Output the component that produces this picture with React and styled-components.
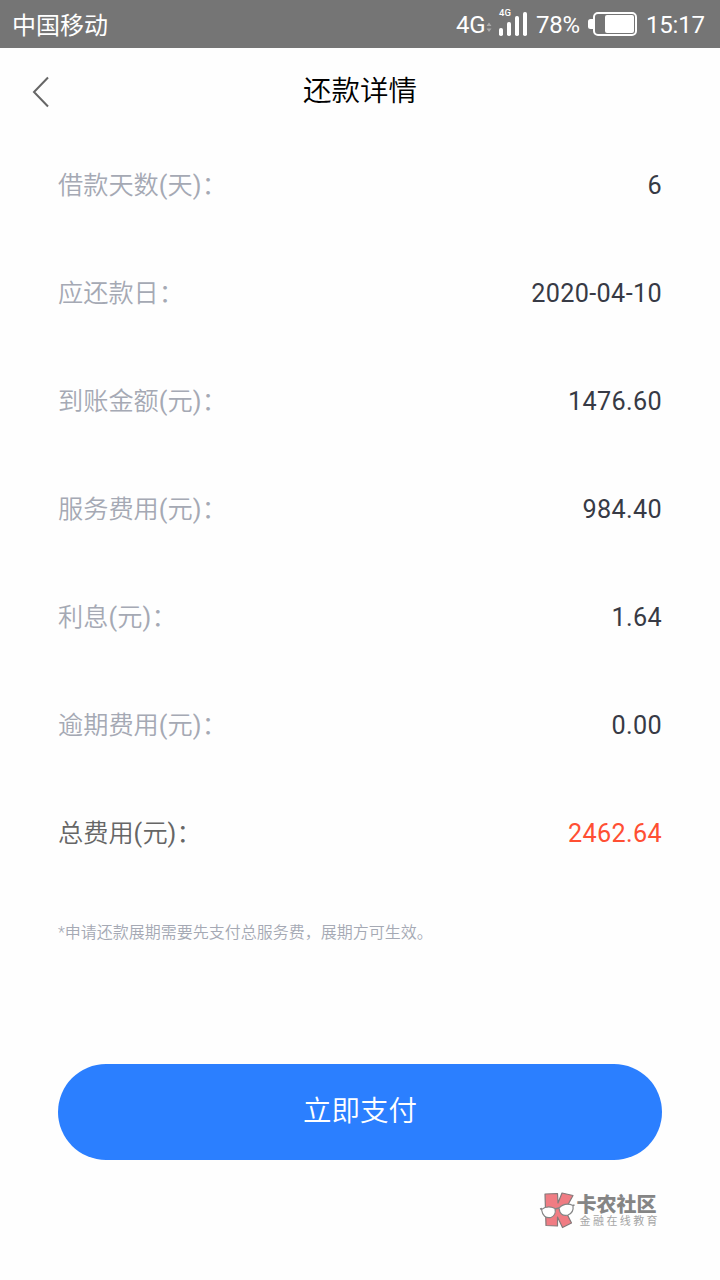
import React from "react";
import styled, { createGlobalStyle } from "styled-components";

const GlobalStyle = createGlobalStyle`
  * { box-sizing: border-box; }
  body {
    margin: 0;
    background: #fff;
    font-family: Roboto, "Noto Sans CJK SC", sans-serif;
  }
`;

const Screen = styled.div`
  width: 720px;
  height: 1280px;
  display: flex;
  flex-direction: column;
  background: #fefefe;
  overflow: hidden;
`;

const StatusBar = styled.div`
  height: 48px;
  flex: none;
  display: flex;
  align-items: center;
  justify-content: space-between;
  padding: 0 16px 0 12px;
  background: #757575;
  color: #fff;
  font-size: 24px;
  line-height: 48px;
`;

const Carrier = styled.span`
  height: 48px;
  line-height: 52px;
`;

const StatusGroup = styled.div`
  display: flex;
  align-items: center;
  height: 48px;
`;

const StatusText = styled.span`
  width: ${(p) => p.$width}px;
  height: 48px;
  line-height: 50px;
  letter-spacing: -0.2px;
  white-space: nowrap;
`;

const StatusIcon = styled.svg`
  display: block;
  flex: none;
`;

const Header = styled.header`
  height: 84px;
  flex: none;
  display: grid;
  grid-template-columns: 80px 1fr 80px;
  align-items: center;
`;

const BackButton = styled.button`
  justify-self: start;
  padding: 2px 0 0 30px;
  border: 0;
  background: none;
  line-height: 0;
`;

const Title = styled.h1`
  margin: 0;
  padding-top: 2px;
  text-align: center;
  font-size: 28.5px;
  font-weight: 350;
  line-height: 84px;
  color: #000;
`;

const Details = styled.dl`
  margin: 0;
  padding: 0 58px;
`;

const Row = styled.div`
  height: 108px;
  display: flex;
  align-items: center;
  justify-content: space-between;
`;

const Label = styled.dt`
  font-size: 25.2px;
  font-weight: 350;
  line-height: 36px;
  color: ${(p) => (p.$total ? "#666666" : "#a5a9b4")};
`;

const Paren = styled.span`
  font-weight: 400;
  letter-spacing: 0.2px;
`;

const Value = styled.dd`
  margin: 0;
  font-size: 25.2px;
  letter-spacing: 0.36px;
  line-height: 36px;
  color: ${(p) => (p.$total ? "#ff4f33" : "#373a45")};
`;

const Note = styled.p`
  margin: 33px 58px 0;
  font-size: 16px;
  font-weight: 350;
  line-height: 24px;
  color: #a5a9b4;
`;

const PayButton = styled.button`
  margin: 119px 58px 0;
  height: 96px;
  flex: none;
  border: 0;
  border-radius: 48px;
  padding: 0 0 8px;
  background: #2b7fff;
  color: #fff;
  font-family: inherit;
  font-size: 28.5px;
  font-weight: 350;
`;

const Brand = styled.footer`
  display: flex;
  align-self: flex-end;
  gap: 2px;
  margin: 31px 60px 0 0;
`;

const BrandText = styled.div`
  display: flex;
  flex-direction: column;
  padding-top: 2px;
`;

const BrandName = styled.span`
  font-size: 20px;
  font-weight: 900;
  line-height: 25px;
  color: #858585;
`;

const BrandSlogan = styled.span`
  padding-left: 3px;
  font-size: 11px;
  letter-spacing: 2.4px;
  line-height: 8px;
  white-space: nowrap;
  color: #a5a5a5;
`;

const rows = [
  ["借款天数(天)：", "6"],
  ["应还款日：", "2020-04-10"],
  ["到账金额(元)：", "1476.60"],
  ["服务费用(元)：", "984.40"],
  ["利息(元)：", "1.64"],
  ["逾期费用(元)：", "0.00"],
  ["总费用(元)：", "2462.64"],
];

function LabelText({ text }) {
  return text
    .split(/([()])/)
    .map((part, i) => (i % 2 ? <Paren key={i}>{part}</Paren> : part));
}

function SignalIcon() {
  return (
    <StatusIcon width="51" height="48" viewBox="0 0 51 48" fill="#fff">
      <path d="M1.5 26 4 22.5 6.5 26ZM1.5 28.5 4 32 6.5 28.5Z" fill="#a9a9a9" />
      <text x="14" y="16" fontSize="9.5" fontWeight="500" fontFamily="Roboto">4G</text>
      <rect x="14" y="28" width="4" height="8" rx="1.8" />
      <rect x="22" y="22" width="4" height="14" rx="1.8" />
      <rect x="30" y="16" width="4" height="20" rx="1.8" />
      <rect x="38" y="12" width="4" height="24" rx="1.8" />
    </StatusIcon>
  );
}

function BatteryIcon() {
  return (
    <StatusIcon width="59" height="48" viewBox="0 0 59 48" fill="#fff">
      <path d="M6 19H3.5Q1 19 1 21.5V26.5Q1 29 3.5 29H6Z" />
      <rect x="7" y="13" width="42" height="22" rx="4" fill="none" stroke="#fff" strokeWidth="2" />
      <rect x="18" y="15" width="29" height="18" rx="2" />
    </StatusIcon>
  );
}

function BrandMark() {
  return (
    <svg width="36" height="38" viewBox="0 0 36 38" strokeLinejoin="round">
      <path d="M6 3 18.5 2.500 19 12 23 2 34 4.500 26 19 32.500 32 23.500 36.500 18.500 26 18.500 35 7 34.500Z" fill="#f07c83" stroke="#85797a" strokeWidth="1.200" />
      <path d="M2.500 18.500Q8.500 14 16 17.500Q17.500 24 12 26.500Q4 28 2.500 18.500Z" fill="#fff" stroke="#858585" strokeWidth="1.200" />
      <path d="M20 17Q26 11 34 14.500Q35 21.500 29 24Q21 26 20 17Z" fill="#fff" stroke="#858585" strokeWidth="1.200" />
      <path d="M1 18 3 17.500M16 18 20 17M34 14.500 35.500 14" fill="none" stroke="#858585" strokeWidth="1.500" />
    </svg>
  );
}

export default function App() {
  return (
    <>
      <GlobalStyle />
      <Screen>
        <StatusBar>
          <Carrier>中国移动</Carrier>
          <StatusGroup>
            <StatusText $width={29}>4G</StatusText>
            <SignalIcon />
            <StatusText $width={51}>78%</StatusText>
            <BatteryIcon />
            <StatusText $width={58}>15:17</StatusText>
          </StatusGroup>
        </StatusBar>
        <Header>
          <BackButton aria-label="返回">
            <svg width="20" height="32" viewBox="0 0 20 32" fill="none" stroke="#666" strokeWidth="2">
              <path d="M18 1.5 4 16 18 30.5" />
            </svg>
          </BackButton>
          <Title>还款详情</Title>
        </Header>
        <Details>
          {rows.map(([label, value], i) => (
            <Row key={label}>
              <Label $total={i === rows.length - 1}>
                <LabelText text={label} />
              </Label>
              <Value $total={i === rows.length - 1}>{value}</Value>
            </Row>
          ))}
        </Details>
        <Note>*申请还款展期需要先支付总服务费，展期方可生效。</Note>
        <PayButton>立即支付</PayButton>
        <Brand>
          <BrandMark />
          <BrandText>
            <BrandName>卡农社区</BrandName>
            <BrandSlogan>金融在线教育</BrandSlogan>
          </BrandText>
        </Brand>
      </Screen>
    </>
  );
}
